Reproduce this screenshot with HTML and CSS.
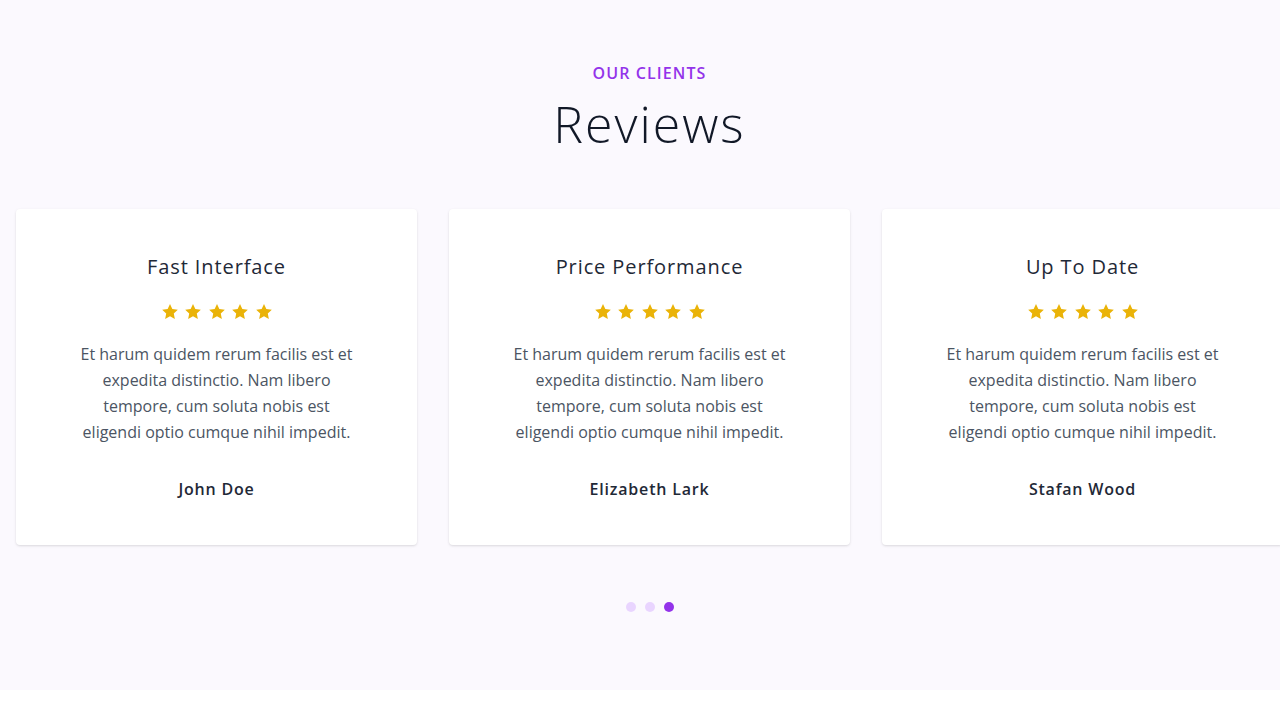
FILE: index.html
```html
<!DOCTYPE html>
<html lang="en">
<head>
<meta charset="utf-8">
<title>Reviews</title>
<link rel="stylesheet" href="styles.css">
</head>
<body>
<section class="reviews">
  <header class="reviews-head">
    <p class="eyebrow">OUR CLIENTS</p>
    <h2 class="title">Reviews</h2>
  </header>
  <div class="track">
    <article class="card">
      <h3 class="card-title">Fast Interface</h3>
      <div class="stars">
        <svg viewBox="0 0 20 20"><path d="M10 1.2l2.6 5.6 6.1.7-4.5 4.2 1.2 6.1L10 14.8l-5.4 3 1.2-6.1L1.3 7.5l6.1-.7z"/></svg>
        <svg viewBox="0 0 20 20"><path d="M10 1.2l2.6 5.6 6.1.7-4.5 4.2 1.2 6.1L10 14.8l-5.4 3 1.2-6.1L1.3 7.5l6.1-.7z"/></svg>
        <svg viewBox="0 0 20 20"><path d="M10 1.2l2.6 5.6 6.1.7-4.5 4.2 1.2 6.1L10 14.8l-5.4 3 1.2-6.1L1.3 7.5l6.1-.7z"/></svg>
        <svg viewBox="0 0 20 20"><path d="M10 1.2l2.6 5.6 6.1.7-4.5 4.2 1.2 6.1L10 14.8l-5.4 3 1.2-6.1L1.3 7.5l6.1-.7z"/></svg>
        <svg viewBox="0 0 20 20"><path d="M10 1.2l2.6 5.6 6.1.7-4.5 4.2 1.2 6.1L10 14.8l-5.4 3 1.2-6.1L1.3 7.5l6.1-.7z"/></svg>
      </div>
      <p class="card-text">Et harum quidem rerum facilis est et expedita distinctio. Nam libero tempore, cum soluta nobis est eligendi optio cumque nihil impedit.</p>
      <p class="card-name">John Doe</p>
    </article>
    <article class="card">
      <h3 class="card-title">Price Performance</h3>
      <div class="stars">
        <svg viewBox="0 0 20 20"><path d="M10 1.2l2.6 5.6 6.1.7-4.5 4.2 1.2 6.1L10 14.8l-5.4 3 1.2-6.1L1.3 7.5l6.1-.7z"/></svg>
        <svg viewBox="0 0 20 20"><path d="M10 1.2l2.6 5.6 6.1.7-4.5 4.2 1.2 6.1L10 14.8l-5.4 3 1.2-6.1L1.3 7.5l6.1-.7z"/></svg>
        <svg viewBox="0 0 20 20"><path d="M10 1.2l2.6 5.6 6.1.7-4.5 4.2 1.2 6.1L10 14.8l-5.4 3 1.2-6.1L1.3 7.5l6.1-.7z"/></svg>
        <svg viewBox="0 0 20 20"><path d="M10 1.2l2.6 5.6 6.1.7-4.5 4.2 1.2 6.1L10 14.8l-5.4 3 1.2-6.1L1.3 7.5l6.1-.7z"/></svg>
        <svg viewBox="0 0 20 20"><path d="M10 1.2l2.6 5.6 6.1.7-4.5 4.2 1.2 6.1L10 14.8l-5.4 3 1.2-6.1L1.3 7.5l6.1-.7z"/></svg>
      </div>
      <p class="card-text">Et harum quidem rerum facilis est et expedita distinctio. Nam libero tempore, cum soluta nobis est eligendi optio cumque nihil impedit.</p>
      <p class="card-name">Elizabeth Lark</p>
    </article>
    <article class="card">
      <h3 class="card-title">Up To Date</h3>
      <div class="stars">
        <svg viewBox="0 0 20 20"><path d="M10 1.2l2.6 5.6 6.1.7-4.5 4.2 1.2 6.1L10 14.8l-5.4 3 1.2-6.1L1.3 7.5l6.1-.7z"/></svg>
        <svg viewBox="0 0 20 20"><path d="M10 1.2l2.6 5.6 6.1.7-4.5 4.2 1.2 6.1L10 14.8l-5.4 3 1.2-6.1L1.3 7.5l6.1-.7z"/></svg>
        <svg viewBox="0 0 20 20"><path d="M10 1.2l2.6 5.6 6.1.7-4.5 4.2 1.2 6.1L10 14.8l-5.4 3 1.2-6.1L1.3 7.5l6.1-.7z"/></svg>
        <svg viewBox="0 0 20 20"><path d="M10 1.2l2.6 5.6 6.1.7-4.5 4.2 1.2 6.1L10 14.8l-5.4 3 1.2-6.1L1.3 7.5l6.1-.7z"/></svg>
        <svg viewBox="0 0 20 20"><path d="M10 1.2l2.6 5.6 6.1.7-4.5 4.2 1.2 6.1L10 14.8l-5.4 3 1.2-6.1L1.3 7.5l6.1-.7z"/></svg>
      </div>
      <p class="card-text">Et harum quidem rerum facilis est et expedita distinctio. Nam libero tempore, cum soluta nobis est eligendi optio cumque nihil impedit.</p>
      <p class="card-name">Stafan Wood</p>
    </article>
  </div>
  <div class="dots">
    <span class="dot"></span>
    <span class="dot"></span>
    <span class="dot dot-active"></span>
  </div>
</section>
</body>
</html>
```

FILE: styles.css
```css
* { box-sizing: border-box; }
html, body { margin: 0; padding: 0; }
body {
  background: #ffffff;
  font-family: "Open Sans", "Noto Sans", sans-serif;
  color: #1f2937;
  overflow: hidden;
}
.reviews {
  background: #fbf9fe;
  width: 1299px;
  height: 690px;
  padding-top: 60px;
}
.reviews-head { text-align: center; }
.eyebrow {
  margin: 0;
  color: #9333ea;
  font-size: 16px;
  font-weight: 600;
  line-height: 26px;
  letter-spacing: 1.1px;
}
.title {
  margin: 8px 0 0;
  font-size: 50px;
  font-weight: 300;
  line-height: 60px;
  letter-spacing: 2px;
  color: #111827;
}
.track {
  display: flex;
  gap: 32px;
  padding-left: 16px;
  margin-top: 55px;
}
.card {
  flex: 0 0 401px;
  height: 336px;
  background: #ffffff;
  border-radius: 4px;
  box-shadow: 0 1px 3px rgba(0,0,0,0.10), 0 1px 2px rgba(0,0,0,0.04);
  text-align: center;
  padding-top: 44px;
}
.card-title {
  margin: 0;
  font-size: 20px;
  font-weight: 400;
  line-height: 28px;
  letter-spacing: 0.9px;
  color: #1f2937;
}
.stars {
  display: flex;
  justify-content: center;
  gap: 5.5px;
  margin-top: 22px;
}
.stars svg {
  width: 18px;
  height: 18px;
  fill: #eab308;
}
.card-text {
  max-width: 280px;
  margin: 20px auto 0;
  font-size: 16px;
  line-height: 26px;
  color: #4b5563;
}
.card-name {
  margin: 32px 0 0;
  font-size: 16px;
  font-weight: 600;
  line-height: 24px;
  letter-spacing: 0.8px;
  color: #1f2937;
}
.dots {
  display: flex;
  justify-content: center;
  gap: 9px;
  margin-top: 57px;
}
.dot {
  width: 10px;
  height: 10px;
  border-radius: 50%;
  background: #e9d5ff;
}
.dot-active { background: #9333ea; }
```
